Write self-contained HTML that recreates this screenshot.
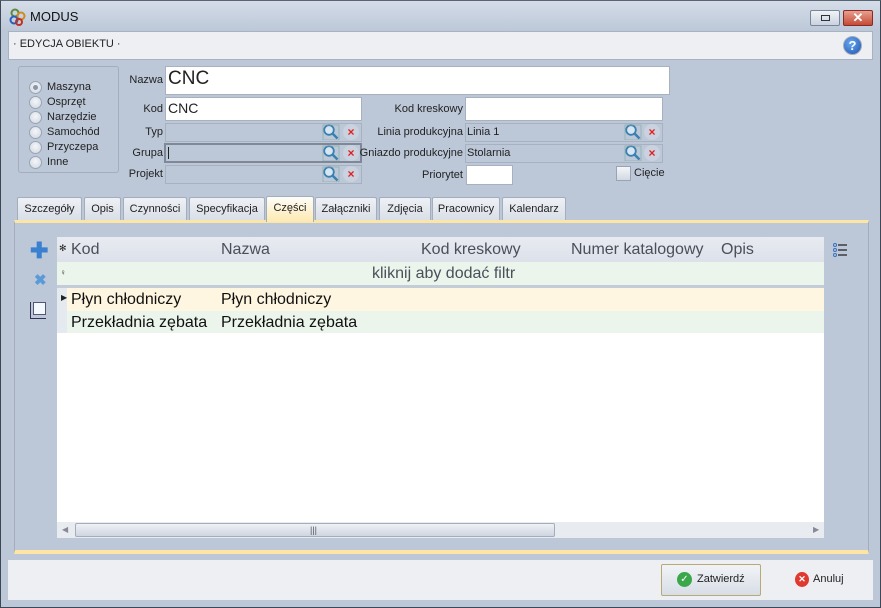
<!DOCTYPE html>
<html><head><meta charset="utf-8"><style>
*{margin:0;padding:0;box-sizing:border-box}
body{width:881px;height:608px;overflow:hidden;font-family:"Liberation Sans",sans-serif;font-size:11px;color:#222;background:#bcc8d8;position:relative}
.a{position:absolute}
.lbl{position:absolute;text-align:right;font-size:11px;color:#222}
.inp{position:absolute;background:#fff;border:1px solid #a7b1c0}
.ro{position:absolute;background:#bcc8d8;border:1px solid #a7b1c0;font-size:11px;padding:2px 1px}
.rad{position:absolute;width:13px;height:13px;border-radius:50%;border:1px solid #98a4b4;background:radial-gradient(circle at 50% 40%,#f4f6f9,#cfd6e0)}
.tab{position:absolute;top:197px;height:24px;border:1px solid #a3adbb;border-bottom:none;background:linear-gradient(#eef1f5,#d8dee7);font-size:11px;text-align:center;line-height:22px;border-radius:2px 2px 0 0}
.mag{position:absolute;width:18px;height:16px}
.x{position:absolute;color:#e02020;font-weight:bold;font-size:12px;width:16px;height:16px;border-radius:50%;background:#c9d2de;text-align:center;line-height:16px}
.col{position:absolute;font-size:16px;color:#4a4f5a}
</style></head><body>
<div class="a" style="left:0;top:0;width:881px;height:608px;border:1px solid #3e4756;border-top-color:#5a6575"></div>
<div class="a" style="left:1px;top:1px;width:879px;height:30px;background:linear-gradient(#d4dce8,#bcc8d8)"></div>
<svg class="a" style="left:9px;top:8px" width="18" height="18" viewBox="0 0 18 18"><circle cx="6" cy="5" r="3.5" fill="none" stroke="#5a8a3a" stroke-width="2"/><circle cx="12" cy="8" r="3.5" fill="none" stroke="#d08a20" stroke-width="2"/><circle cx="5" cy="12" r="3.5" fill="none" stroke="#2a5fc0" stroke-width="2"/><circle cx="10" cy="14" r="3" fill="none" stroke="#c03020" stroke-width="2"/></svg>
<div class="a" style="left:30px;top:9px;font-size:13px;color:#111">MODUS</div>
<div class="a" style="left:810px;top:10px;width:30px;height:16px;border:1px solid #7a8597;border-radius:2px;background:linear-gradient(#f0f3f7,#c9d2df)"><div class="a" style="left:10px;top:4px;width:9px;height:6px;border:1px solid #333"></div></div>
<div class="a" style="left:843px;top:10px;width:30px;height:16px;border:1px solid #8a2a20;border-radius:2px;background:linear-gradient(#e8a090,#c44a35);color:#fff;font-weight:bold;text-align:center;line-height:14px;font-size:13px">✕</div>
<div class="a" style="left:8px;top:31px;width:865px;height:29px;background:#edeff3;border:1px solid #a8b2c2"></div>
<div class="a" style="left:13px;top:38px;font-size:11px">· EDYCJA OBIEKTU ·</div>
<div class="a" style="left:843px;top:36px;width:19px;height:19px;border-radius:50%;background:radial-gradient(circle at 40% 35%,#6aa8f0,#1a55b0);border:1px solid #aab;color:#fff;font-weight:bold;text-align:center;line-height:17px;font-size:13px">?</div>

<div class="a" style="left:18px;top:66px;width:101px;height:107px;border:1px solid #a3adbb;border-radius:3px"></div>
<div class="rad" style="left:29px;top:81px"><div class="a" style="left:3px;top:3px;width:5px;height:5px;border-radius:50%;background:#8a96a8"></div></div><div class="a" style="left:47px;top:81px">Maszyna</div>
<div class="rad" style="left:29px;top:96px"></div><div class="a" style="left:47px;top:96px">Osprzęt</div>
<div class="rad" style="left:29px;top:111px"></div><div class="a" style="left:47px;top:111px">Narzędzie</div>
<div class="rad" style="left:29px;top:126px"></div><div class="a" style="left:47px;top:126px">Samochód</div>
<div class="rad" style="left:29px;top:141px"></div><div class="a" style="left:47px;top:141px">Przyczepa</div>
<div class="rad" style="left:29px;top:156px"></div><div class="a" style="left:47px;top:156px">Inne</div>

<div class="lbl" style="left:120px;top:74px;width:43px">Nazwa</div>
<div class="inp" style="left:165px;top:66px;width:505px;height:29px;font-size:19px;padding:1px 2px">CNC</div>
<div class="lbl" style="left:120px;top:103px;width:43px">Kod</div>
<div class="inp" style="left:165px;top:97px;width:197px;height:24px;font-size:14px;padding:2px 2px">CNC</div>
<div class="lbl" style="left:120px;top:126px;width:43px">Typ</div>
<div class="ro" style="left:165px;top:123px;width:197px;height:19px"></div>
<div class="lbl" style="left:110px;top:147px;width:53px">Grupa</div>
<div class="ro" style="left:164px;top:143px;width:198px;height:20px;border:2px solid #7e8897"><div class="a" style="left:2px;top:2px;width:1px;height:12px;background:#222"></div></div>
<div class="lbl" style="left:110px;top:168px;width:53px">Projekt</div>
<div class="ro" style="left:165px;top:165px;width:197px;height:19px"></div>

<div class="lbl" style="left:360px;top:103px;width:103px">Kod kreskowy</div>
<div class="inp" style="left:465px;top:97px;width:198px;height:24px"></div>
<div class="lbl" style="left:360px;top:126px;width:103px">Linia produkcyjna</div>
<div class="ro" style="left:465px;top:123px;width:198px;height:19px">Linia 1</div>
<div class="lbl" style="left:358px;top:147px;width:105px;white-space:nowrap">Gniazdo produkcyjne</div>
<div class="ro" style="left:465px;top:144px;width:198px;height:19px">Stolarnia</div>
<div class="lbl" style="left:360px;top:169px;width:103px">Priorytet</div>
<div class="inp" style="left:466px;top:165px;width:47px;height:20px"></div>
<div class="a" style="left:616px;top:166px;width:15px;height:15px;border:1px solid #98a4b4;background:linear-gradient(#f4f6f9,#d2d9e3)"></div>
<div class="a" style="left:634px;top:167px">Cięcie</div>

<svg width="0" height="0" style="position:absolute"><defs><g id="m"><circle cx="7" cy="6" r="4.8" fill="#d8e6f2" stroke="#3a80b0" stroke-width="1.8"/><path d="M10.5 9.5l5 5" stroke="#3a80b0" stroke-width="2.5"/><rect x="1" y="1" width="16" height="15" fill="none" stroke="#8aa" stroke-width="0.7"/></g></defs></svg>
<svg class="mag" style="left:322px;top:124px"><use href="#m"/></svg><div class="x" style="left:343px;top:124px">×</div>
<svg class="mag" style="left:322px;top:145px"><use href="#m"/></svg><div class="x" style="left:343px;top:145px">×</div>
<svg class="mag" style="left:322px;top:166px"><use href="#m"/></svg><div class="x" style="left:343px;top:166px">×</div>
<svg class="mag" style="left:624px;top:124px"><use href="#m"/></svg><div class="x" style="left:644px;top:124px">×</div>
<svg class="mag" style="left:624px;top:145px"><use href="#m"/></svg><div class="x" style="left:644px;top:145px">×</div>

<div class="tab" style="left:17px;width:65px">Szczegóły</div>
<div class="tab" style="left:84px;width:37px">Opis</div>
<div class="tab" style="left:123px;width:64px">Czynności</div>
<div class="tab" style="left:189px;width:76px">Specyfikacja</div>
<div class="tab" style="left:266px;width:48px;top:196px;height:26px;background:linear-gradient(#fdfdf9,#fde9b0);z-index:2">Części</div>
<div class="tab" style="left:315px;width:62px">Załączniki</div>
<div class="tab" style="left:379px;width:52px">Zdjęcia</div>
<div class="tab" style="left:432px;width:68px">Pracownicy</div>
<div class="tab" style="left:502px;width:64px">Kalendarz</div>

<div class="a" style="left:14px;top:220px;width:855px;height:334px;border:1px solid #a3adbb;border-top:3px solid #fde5a5;border-bottom:4px solid #fde5a5;background:#bcc8d8"></div>
<div class="a" style="left:30px;top:240px;color:#3a80d0;font-size:22px;font-weight:bold;line-height:22px">✚</div>
<div class="a" style="left:34px;top:271px;color:#5a9ad8;font-size:15px;font-weight:bold">✖</div>
<div class="a" style="left:30px;top:302px;width:1px;height:16px;background:#335"></div><div class="a" style="left:33px;top:302px;width:13px;height:13px;border:1px solid #557;background:#f4f8ff"></div><div class="a" style="left:30px;top:318px;width:16px;height:1px;background:#335"></div>

<div class="a" style="left:57px;top:237px;width:767px;height:301px;background:#fff"></div>
<div class="a" style="left:57px;top:237px;width:767px;height:25px;background:linear-gradient(#e8ebf1,#dce1ea)"></div>
<div class="a" style="left:57px;top:262px;width:767px;height:23px;background:#ebf5ec"></div>
<div class="a" style="left:57px;top:285px;width:767px;height:3px;background:#c4ccd8"></div>
<div class="a" style="left:57px;top:288px;width:767px;height:23px;background:#fef6e0"></div>
<div class="a" style="left:57px;top:311px;width:767px;height:22px;background:#ebf5ec"></div>
<div class="a" style="left:57px;top:288px;width:10px;height:45px;background:#e5eaf0"></div>
<div class="a" style="left:59px;top:243px;font-size:9px">✻</div>
<div class="a" style="left:60px;top:268px;font-size:8px">♀</div>
<div class="a" style="left:61px;top:293px;font-size:8px">▶</div>
<div class="col" style="left:71px;top:241px">Kod</div>
<div class="col" style="left:221px;top:241px">Nazwa</div>
<div class="col" style="left:421px;top:241px">Kod kreskowy</div>
<div class="col" style="left:571px;top:241px">Numer katalogowy</div>
<div class="col" style="left:721px;top:241px">Opis</div>
<div class="col" style="left:372px;top:265px">kliknij aby dodać filtr</div>
<div class="col" style="left:71px;top:291px;color:#111">Płyn chłodniczy</div>
<div class="col" style="left:221px;top:291px;color:#111">Płyn chłodniczy</div>
<div class="col" style="left:71px;top:314px;color:#111">Przekładnia zębata</div>
<div class="col" style="left:221px;top:314px;color:#111">Przekładnia zębata</div>
<div class="a" style="left:57px;top:522px;width:767px;height:16px;background:#e8ebef"></div>
<div class="a" style="left:75px;top:523px;width:480px;height:14px;border:1px solid #a3adbb;border-radius:2px;background:linear-gradient(#eef1f5,#cfd6e0)"></div>
<div class="a" style="left:62px;top:525px;font-size:8px;color:#889">◀</div>
<div class="a" style="left:813px;top:525px;font-size:8px;color:#889">▶</div>
<div class="a" style="left:310px;top:525px;font-size:9px;color:#556">|||</div>
<svg class="a" style="left:832px;top:242px" width="16" height="16"><g fill="none" stroke="#3a70c0"><circle cx="3" cy="3" r="1.5"/><circle cx="3" cy="8" r="1.5"/><circle cx="3" cy="13" r="1.5"/></g><g stroke="#222" stroke-width="1.2"><path d="M6 3h9M6 8h9M6 13h9"/></g></svg>

<div class="a" style="left:8px;top:560px;width:865px;height:40px;background:#edeff3"></div>
<div class="a" style="left:661px;top:564px;width:100px;height:32px;border:1px solid #b9a878;border-radius:2px;background:linear-gradient(#f1f3f6,#d8dee7)"></div>
<div class="a" style="left:677px;top:572px;width:15px;height:15px;border-radius:50%;background:#3aa84a;color:#fff;font-size:10px;text-align:center;line-height:15px">✓</div>
<div class="a" style="left:697px;top:573px">Zatwierdź</div>
<div class="a" style="left:795px;top:572px;width:14px;height:15px;border-radius:50%;background:#e03a30;color:#fff;font-size:9px;text-align:center;line-height:15px;font-weight:bold">✕</div>
<div class="a" style="left:813px;top:573px">Anuluj</div>
</body></html>
